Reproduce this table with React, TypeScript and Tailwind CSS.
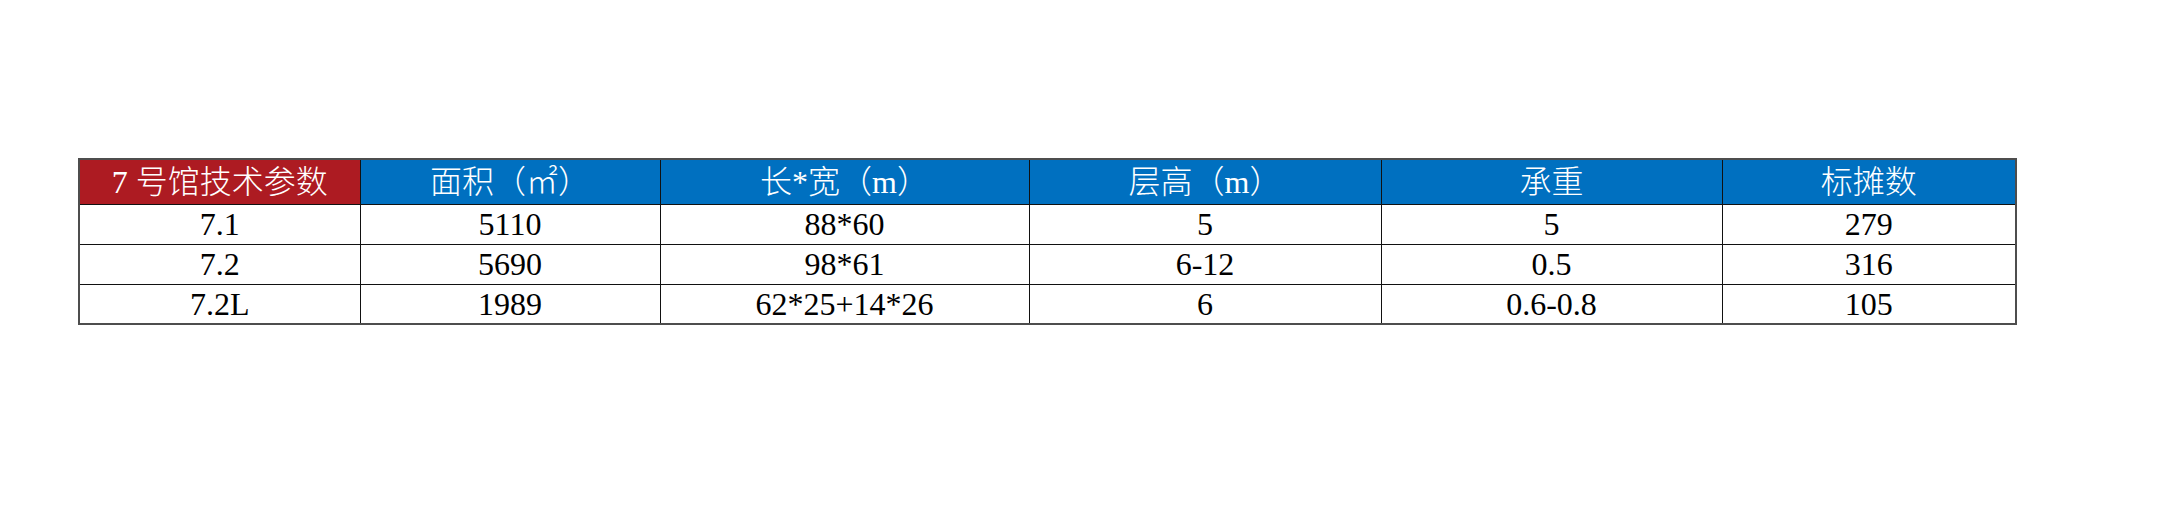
import React from 'react';

const cols = [
  { label: '7 号馆技术参数', w: 'w-[281px]', bg: 'bg-[#ad1b22]' },
  { label: '面积（㎡）', w: 'w-[300px]', bg: 'bg-[#0070c0]' },
  { label: '长*宽（m）', w: 'w-[369px]', bg: 'bg-[#0070c0]' },
  { label: '层高（m）', w: 'w-[352px]', bg: 'bg-[#0070c0]' },
  { label: '承重', w: 'w-[341px]', bg: 'bg-[#0070c0]' },
  { label: '标摊数', w: 'w-[294px]', bg: 'bg-[#0070c0]' },
];

const rows = [
  ['7.1', '5110', '88*60', '5', '5', '279'],
  ['7.2', '5690', '98*61', '6-12', '0.5', '316'],
  ['7.2L', '1989', '62*25+14*26', '6', '0.6-0.8', '105'],
];

export default function App() {
  return (
    <div className="w-[2182px] h-[506px] bg-white pt-[158px] pl-[78px] font-['Liberation_Serif','Noto_Sans_CJK_SC',serif]">
      <table className="table-fixed border-collapse border-2 border-[#4d4d4d] w-[1938px]">
        <colgroup>
          {cols.map((c, i) => (
            <col key={i} className={c.w} />
          ))}
        </colgroup>
        <thead>
          <tr className="h-[45px]">
            {cols.map((c, i) => (
              <th
                key={i}
                className={`${c.bg} border border-[#111] p-0 text-center text-[32px] leading-none font-light text-white`}
              >
                {c.label}
              </th>
            ))}
          </tr>
        </thead>
        <tbody>
          {rows.map((r, ri) => (
            <tr key={ri} className="h-[40px]">
              {r.map((v, ci) => (
                <td
                  key={ci}
                  className="border border-[#111] p-0 text-center text-[32px] leading-none text-black"
                >
                  {v}
                </td>
              ))}
            </tr>
          ))}
        </tbody>
      </table>
    </div>
  );
}
